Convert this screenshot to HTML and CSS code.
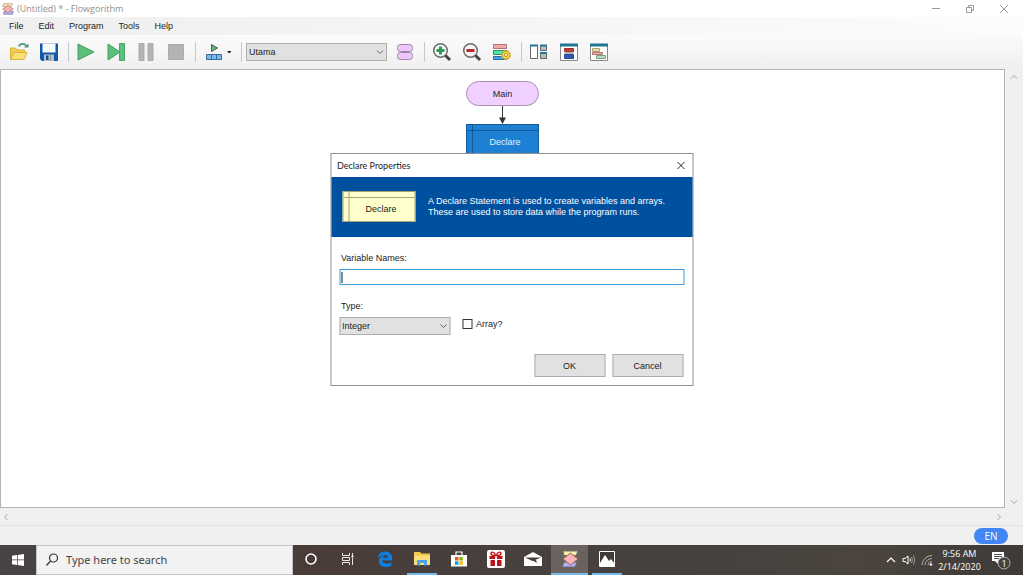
FILE: index.html
```html
<!DOCTYPE html>
<html lang="en">
<head>
<meta charset="utf-8">
<title>(Untitled) * - Flowgorithm</title>
<link rel="stylesheet" href="styles.css">
</head>
<body>
<header class="titlebar">
  <svg class="app-icon" width="12" height="12" viewBox="0 0 16 16"><path d="M2 1h12l-2 4H1z" fill="#f8eeb0" stroke="#aaa177"/><path d="M2 15h12l1-4H3z" fill="#b5b5f5" stroke="#7777aa"/><path d="M8 3l7 5-7 5-7-5z" fill="#f8b0b0" stroke="#bb7780"/></svg>
  <h1 class="title">(Untitled) * - Flowgorithm</h1>
  <button class="win-btn" aria-label="Minimize"><svg width="10" height="10" viewBox="0 0 10 10"><path d="M1 4.500h8"/></svg></button>
  <button class="win-btn" aria-label="Restore"><svg width="10" height="10" viewBox="0 0 10 10"><path d="M1.500 3.500h5v5h-5zM3.500 3.500v-2h5v5h-2"/></svg></button>
  <button class="win-btn" aria-label="Close"><svg width="10" height="10" viewBox="0 0 10 10"><path d="M1 1l8 8M9 1L1 9"/></svg></button>
</header>

<nav class="menubar">
  <button>File</button><button>Edit</button><button>Program</button><button>Tools</button><button>Help</button>
</nav>

<div class="toolbar">
  <button class="tool" aria-label="Open"><svg width="20" height="20" viewBox="0 0 20 20"><path d="M1.500 17.500V6h5l1.500 2h7.500v3" fill="#f3cf55" stroke="#d9ae35"/><path d="M1.500 17.500L5 10.500h13L15 17.500z" fill="#fbe07a" stroke="#dcb23a"/><path d="M10 4.500c1-3.500 6-3.500 7.500 0" fill="none" stroke="#4a9d78" stroke-width="1.800"/><path d="M15 5.500h4.500V1.500z" fill="#4a9d78"/></svg></button>
  <button class="tool" aria-label="Save"><svg width="20" height="20" viewBox="0 0 20 20"><path d="M1 1.500h18V19H3l-2-2z" fill="#1257a8"/><path d="M3.500 1.500h13v9h-13z" fill="#f4fafc"/><path d="M5 12.500h10V19H5z" fill="#b9c0c8"/><path d="M7 13.500h2.500V18H7z" fill="#174f93"/><path d="M11 13h1v6h-1z" fill="#8a929b"/></svg></button>
  <span class="sep"></span>
  <button class="tool" aria-label="Run"><svg width="20" height="20" viewBox="0 0 20 20"><path d="M2 2l16 8-16 8z" fill="#5dbf7c" stroke="#3f9f60"/></svg></button>
  <button class="tool" aria-label="Step"><svg width="20" height="20" viewBox="0 0 20 20"><path d="M2 2l12 8-12 8z" fill="#5dbf7c" stroke="#3f9f60"/><path d="M13.500 1.500h5v17h-5z" fill="#5dbf7c" stroke="#4aa769"/></svg></button>
  <button class="tool" aria-label="Pause"><svg width="20" height="20" viewBox="0 0 20 20"><path d="M3 1.500h5v17H3zM12 1.500h5v17h-5z" fill="#b4b4b4" stroke="#aaa"/></svg></button>
  <button class="tool" aria-label="Stop"><svg width="20" height="20" viewBox="0 0 20 20"><path d="M2.500 2.500h15v15h-15z" fill="#b4b4b4" stroke="#aaa"/></svg></button>
  <span class="sep"></span>
  <button class="tool tool-wide" aria-label="Run speed"><svg width="28" height="20" viewBox="0 0 28 20"><path d="M7.500 2.500l6 3.500-6 3.500z" fill="#5dbf7c" stroke="#555"/><path d="M2.500 12.500h15v5h-15zM7.500 12.500v5M12.500 12.500v5" fill="#7fb9f2" stroke="#3a6a96"/><path d="M23 9h4.500l-2.250 2.500z" fill="#222"/></svg></button>
  <span class="sep"></span>
  <div class="combo combo-fn">
    <select aria-label="Function"><option>Utama</option></select>
    <svg class="chev" width="8" height="6" viewBox="0 0 8 6"><path d="M1 1.500l3 3 3-3"/></svg>
  </div>
  <button class="tool" aria-label="Function manager"><svg width="20" height="20" viewBox="0 0 20 20"><g fill="#efc6fb" stroke="#9b86a3"><rect x="2.500" y="2.500" width="15" height="7" rx="3"/><rect x="2.500" y="10.500" width="15" height="7" rx="3"/></g></svg></button>
  <span class="sep"></span>
  <button class="tool" aria-label="Zoom in"><svg width="20" height="20" viewBox="0 0 20 20"><circle cx="8.500" cy="8.500" r="6.800" fill="#f4f8f6" stroke="#6b6b6b" stroke-width="1.500"/><path d="M13.500 13.500l4.500 4.500" stroke="#444" stroke-width="3"/><path d="M8.500 4.500v8M4.500 8.500h8" stroke="#2f9b57" stroke-width="3"/></svg></button>
  <button class="tool" aria-label="Zoom out"><svg width="20" height="20" viewBox="0 0 20 20"><circle cx="8.500" cy="8.500" r="6.800" fill="#f8f4f4" stroke="#6b6b6b" stroke-width="1.500"/><path d="M13.500 13.500l4.500 4.500" stroke="#444" stroke-width="3"/><path d="M4.500 8.500h8" stroke="#b92a2a" stroke-width="3"/></svg></button>
  <button class="tool" aria-label="Chart style"><svg width="20" height="20" viewBox="0 0 20 20"><path d="M1.500 2.500h13v4h-13z" fill="#f2a8a8" stroke="#a87676"/><path d="M1.500 8.500h13v4h-13z" fill="#4bec9e" stroke="#3a8b62"/><path d="M1.500 14.500h13v3h-13z" fill="#45a1ec" stroke="#2c6da8"/><circle cx="14" cy="13" r="4" fill="#f6da55" stroke="#c09b20"/><circle cx="14" cy="13" r="4.700" fill="none" stroke="#e2c03c" stroke-dasharray="2 1.700"/><circle cx="14" cy="13" r="1.600" fill="#fff" stroke="#b5952a"/></svg></button>
  <span class="sep"></span>
  <button class="tool" aria-label="Window layout"><svg width="20" height="20" viewBox="0 0 20 20"><g fill="#fff" stroke="#666"><path d="M1.500 3.500h7v13h-7z"/><path d="M11.500 3.500h6v5h-6zM11.500 10.500h6v6h-6z" fill="#bbb"/></g><path d="M1 2.500h8v2H1zM11 2.500h7v2h-7zM11 10h7v2h-7z" fill="#247594"/></svg></button>
  <button class="tool" aria-label="Variable watch"><svg width="20" height="20" viewBox="0 0 20 20"><path d="M1.500 2.500h17v16h-17z" fill="#fff" stroke="#888"/><path d="M1 1.500h18v3H1z" fill="#247594"/><path d="M5.500 6.500h9v3h-9z" fill="#c93737" stroke="#9b3030"/><path d="M5.500 9.800h9v2h-9z" fill="#a8a8a8"/><path d="M5.500 12.500h9v4h-9z" fill="#3158b5" stroke="#294994"/></svg></button>
  <button class="tool" aria-label="Console"><svg width="20" height="20" viewBox="0 0 20 20"><path d="M1.500 2.500h17v16h-17z" fill="#fff" stroke="#888"/><path d="M1 1.500h18v3H1z" fill="#247594"/><path d="M3.500 6.500h7v3h-7z" fill="#e5dca2" stroke="#aaa174"/><path d="M3.500 10.500h10v2h-10z" fill="#f2b4b4" stroke="#b97373"/><path d="M7.500 13.500h9v3h-9z" fill="#b5dcc0" stroke="#7aa486"/></svg></button>
</div>

<main class="workspace">
  <section class="canvas">
    <div class="terminal">Main</div>
    <svg class="arrow" width="7" height="18" viewBox="0 0 7 18"><path d="M3.500 0v13" stroke="#333"/><path d="M0 11.500h7L3.500 18z" fill="#333"/></svg>
    <div class="declare declare-selected">Declare</div>
  </section>
  <div class="scroll scroll-v"><svg class="chev" width="8" height="6" viewBox="0 0 8 6"><path d="M1 4.500l3-3 3 3"/></svg><svg class="chev" width="8" height="6" viewBox="0 0 8 6"><path d="M1 1.500l3 3 3-3"/></svg></div>
  <div class="scroll scroll-h"><svg class="chev" width="6" height="8" viewBox="0 0 6 8"><path d="M4.500 1l-3 3 3 3"/></svg><svg class="chev" width="6" height="8" viewBox="0 0 6 8"><path d="M1.500 1l3 3-3 3"/></svg></div>
</main>

<footer class="status"><button class="lang">EN</button></footer>

<div class="taskbar">
  <button class="task start" aria-label="Start"><svg width="12" height="12" viewBox="0 0 12 12"><path d="M0 1.700l5-.7v4.600H0zM5.700.900L12 0v5.600H5.700zM0 6.300h5V11l-5-.7zM5.700 6.300H12V12l-6.300-.9z" fill="#fff"/></svg></button>
  <label class="search">
    <svg width="14" height="14" viewBox="0 0 14 14"><circle cx="8.500" cy="5" r="4" fill="none" stroke="#333" stroke-width="1.200"/><path d="M5.500 8L1.500 12.500" stroke="#333" stroke-width="1.200"/></svg>
    <input type="text" placeholder="Type here to search" aria-label="Type here to search">
  </label>
  <button class="task" aria-label="Cortana"><svg width="16" height="16" viewBox="0 0 16 16"><circle cx="8" cy="8" r="5" fill="none" stroke="#fff" stroke-width="1.600"/></svg></button>
  <button class="task" aria-label="Task view"><svg width="16" height="16" viewBox="0 0 16 16"><path d="M2.500 2v2.500h7V2M2.500 14v-2.500h7V14M2.500 6.500h7v3h-7zM12.500 2v2.500M12.500 7v7" fill="none" stroke="#e8e8e8"/><path d="M11.500 4.500h2v2h-2z" fill="#fff"/></svg></button>
  <button class="task" aria-label="Edge"><svg width="18" height="18" viewBox="0 0 18 18"><path d="M1.500 8C2 4 5 1.500 9.200 1.500c4.300 0 7 3 7 7v2H6.300c.2 2.200 2.200 3 4.400 3 1.800 0 3.300-.5 4.600-1.300v3.500c-1.400.8-3.300 1.300-5.400 1.300-4.300 0-7-2.500-7-6 0-2.600 1.500-4.600 3.700-5.600C4 5.700 2.400 6.600 1.500 8zM6.500 7.800h5.600c0-1.700-1-2.800-2.700-2.800-1.600 0-2.700 1.200-2.900 2.800z" fill="#0f7fe0"/></svg></button>
  <button class="task open" aria-label="File Explorer"><svg width="18" height="18" viewBox="0 0 18 18"><path d="M1 2h6l1.500 1.500H17V15H1z" fill="#f3c64c"/><path d="M1 5.500h16V15H1z" fill="#fbdc7d"/><path d="M4 15.500v-5.500h10v5.500h-3V13H7v2.500z" fill="#4aa5e4"/></svg></button>
  <button class="task" aria-label="Store"><svg width="18" height="18" viewBox="0 0 18 18"><path d="M1 5h16v11.500H1z" fill="#fff"/><path d="M6 5V2h6v3" fill="none" stroke="#fff" stroke-width="1.200"/><path d="M5 7h3.500v3.500H5z" fill="#f25022"/><path d="M9.300 7h3.500v3.500H9.300z" fill="#7fba00"/><path d="M5 11.300h3.500v3.500H5z" fill="#00a4ef"/><path d="M9.300 11.300h3.500v3.500H9.300z" fill="#ffb900"/></svg></button>
  <button class="task" aria-label="Gifts"><svg width="18" height="18" viewBox="0 0 18 18"><rect width="18" height="18" rx="2" fill="#fff"/><path d="M2.500 6H8v3H2.500zM10 6h5.500v3H10zM3.500 10H8v6H3.500zM10 10h4.500v6H10z" fill="#b5171d"/><path d="M9 5.500C7 1 3.500 1.500 4 4c.2 1 2 1.500 5 1.500zM9 5.500c2-4.500 5.500-4 5-1.500-.2 1-2 1.500-5 1.500z" fill="none" stroke="#c8171d" stroke-width="1.400"/></svg></button>
  <button class="task" aria-label="Mail"><svg width="20" height="16" viewBox="0 0 20 16"><path d="M1 6l9-5 9 5v9H1z" fill="#fff"/><path d="M2 6.500h16L9.500 10z" fill="#453f3d"/><path d="M9 9l5 3-1-3z" fill="#453f3d"/></svg></button>
  <button class="task open active" aria-label="Flowgorithm"><svg width="18" height="18" viewBox="0 0 18 18"><path d="M2 1h15l-2 4.500H3z" fill="#fbf3a8" stroke="#776"/><path d="M3 12h13l-2 5H1z" fill="#b3b1f7" stroke="#667"/><path d="M9.500 3L17 9l-7.500 6L2 9z" fill="#ffb3b3" stroke="#966"/></svg></button>
  <button class="task open" aria-label="Photos"><svg width="18" height="18" viewBox="0 0 18 18"><path d="M1.500 1.500h15v15h-15z" fill="#3d3a38" stroke="#fff"/><path d="M2 13l5-8 4 6 2-2 4 5v3H2z" fill="#fff"/></svg></button>
  <div class="tray">
    <button class="tray-btn" aria-label="Show hidden icons"><svg width="10" height="10" viewBox="0 0 10 10"><path d="M1 7l4-4 4 4" fill="none" stroke="#fff" stroke-width="1.200"/></svg></button>
    <button class="tray-btn" aria-label="Volume"><svg width="14" height="12" viewBox="0 0 14 12"><path d="M1 4.500h2L6 2v8L3 7.500H1z" fill="none" stroke="#fff"/><path d="M8 4.500q1 1.500 0 3" fill="none" stroke="#fff"/><path d="M9.500 3q2 3 0 6M11.500 1.500q2.500 4.500 0 9" fill="none" stroke="#9a9694"/></svg></button>
    <button class="tray-btn" aria-label="Network"><svg width="12" height="12" viewBox="0 0 12 12"><path d="M1 11A10 10 0 0 1 11 1.500M4 11a7 7 0 0 1 7-6.500M7 11a4 4 0 0 1 4-3.500" fill="none" stroke="#b5b1af"/><circle cx="10" cy="10.500" r="1.200" fill="#fff"/></svg></button>
    <button class="clock"><span>9:56 AM</span><span>2/14/2020</span></button>
    <button class="notify" aria-label="Notifications"><svg width="20" height="20" viewBox="0 0 20 20"><path d="M1 2h12v9H7v3l-3-3H1z" fill="#fff"/><path d="M3 4.500h8M3 6.500h8M3 8.500h5" stroke="#555"/><circle cx="13" cy="13" r="6" fill="#45413f" stroke="#b5b1af"/></svg><span class="badge">1</span></button>
  </div>
</div>

<form class="dialog" role="dialog" aria-labelledby="dlg-title">
  <div class="dlg-head"><h2 id="dlg-title">Declare Properties</h2><button type="button" class="dlg-close" aria-label="Close"><svg width="9" height="9" viewBox="0 0 9 9"><path d="M1 1l7 7M8 1L1 8"/></svg></button></div>
  <div class="banner">
    <div class="declare declare-sample">Declare</div>
    <p>A Declare Statement is used to create variables and arrays.<br>These are used to store data while the program runs.</p>
  </div>
  <div class="dlg-body">
    <label class="caption" for="names">Variable Names:</label>
    <div class="field"><input id="names" type="text"><span class="caret"></span></div>
    <label class="caption" for="type">Type:</label>
    <div class="type-row">
      <div class="combo"><select id="type"><option>Integer</option></select><svg class="chev" width="8" height="6" viewBox="0 0 8 6"><path d="M1 1.500l3 3 3-3"/></svg></div>
      <label class="check"><input type="checkbox">Array?</label>
    </div>
    <div class="actions"><button type="button">OK</button><button type="button">Cancel</button></div>
  </div>
</form>
</body>
</html>
```

FILE: styles.css
```css
* { box-sizing: border-box; }
body {
  margin: 0;
  height: 100vh;
  display: flex;
  flex-direction: column;
  overflow: hidden;
  position: relative;
  background: #f0f0f0;
  color: #1c1c1c;
  font: 9px/12px "Liberation Sans", Arial, sans-serif;
}
button, input, select { font: inherit; color: inherit; margin: 0; }
button { border: 0; padding: 0; background: none; }
svg { display: block; flex: none; }
h1, h2, p { margin: 0; font-size: inherit; font-weight: normal; }

.titlebar { display: flex; align-items: center; height: 17px; padding: 0 2px; background: #fff; }
.title { flex: 1; padding-left: 3px; color: #909090; font-family: "Open Sans", sans-serif; }
.win-btn { width: 34px; height: 16px; display: grid; place-items: center; }
.win-btn path { fill: none; stroke: #9c9c9c; }

.menubar { display: flex; gap: 1px; height: 18px; padding-left: 2px; background: linear-gradient(90deg, #efefef, #fcfcfc); }
.menubar button { padding: 0 7px; }

.toolbar {
  display: flex;
  align-items: center;
  height: 34px;
  padding-left: 4px;
  background: linear-gradient(#fbfbfb, #f0f0f0);
}
.tool { width: 30px; height: 30px; display: grid; place-items: center; }
.tool-wide { width: 39px; }
.sep { width: 7px; height: 20px; display: grid; justify-content: end; padding-right: 2px; }
.sep::before { content: ""; width: 1px; background: #c8c8c8; }

.combo { display: grid; align-items: center; width: 111px; }
.combo > * { grid-area: 1 / 1; }
.combo select {
  appearance: none;
  width: 100%;
  height: 18px;
  padding: 0 2px;
  border: 1px solid #adadad;
  border-radius: 0;
  background: #e1e1e1;
}
.combo .chev { justify-self: end; margin-right: 3px; pointer-events: none; }
.combo-fn { width: 141px; margin: 0 3px 0 2px; }
.chev path { fill: none; stroke: #666; }

.workspace { flex: 1; display: grid; grid-template: 1fr 17px / 1fr 18px; }
.canvas {
  display: flex;
  flex-direction: column;
  align-items: center;
  padding-top: 11px;
  border: 1px solid #b4b4b4;
  background: #fff;
}
.terminal {
  width: 73px;
  height: 25px;
  border: 1px solid #ac8fb8;
  border-radius: 13px;
  background: #efd0ff;
  line-height: 24px;
  text-align: center;
}
.declare {
  width: 73px;
  height: 31px;
  padding: 5px 0 0 5px;
  border: 1px solid;
  background:
    linear-gradient(var(--line), var(--line)) 0 5px / 100% 1px no-repeat,
    linear-gradient(var(--line), var(--line)) 5px 0 / 1px 100% no-repeat,
    var(--fill);
  border-color: var(--line);
  line-height: 24px;
  text-align: center;
}
.declare-selected { --line: #155a98; --fill: #1e80d2; color: #e4f1fc; }
.declare-sample { --line: #a5a577; --fill: #ffffcc; color: #1c1c1c; flex: none; }
.scroll { display: flex; justify-content: space-between; align-items: center; }
.scroll .chev path { stroke: #aaa; }
.scroll-v { flex-direction: column; padding: 5px 0 3px; }
.scroll-h { padding: 0 3px; }

.status { display: flex; justify-content: flex-end; height: 20px; padding-right: 15px; border-top: 1px solid #e2e2e2; }
.lang {
  width: 34px;
  height: 16px;
  margin-top: 2px;
  border-radius: 8px;
  background: #4285f4;
  color: #fff;
  font: 10px/16px "Open Sans", sans-serif;
}

.taskbar {
  display: flex;
  height: 30px;
  background: linear-gradient(90deg, #484444, #493b38 30%, #47403d 50%, #45413f 65%, #4b443e 85%, #3d3a38);
}
.task { width: 37px; display: grid; place-items: center; border-bottom: 2px solid transparent; }
.start { width: 36px; border: 0; }
.open { background: linear-gradient(#76b9ed, #76b9ed) 50% 100% / 30px 2px no-repeat border-box; }
.active { background-color: #69625f; background-size: 37px 2px; }
.search { display: flex; align-items: center; gap: 7px; width: 257px; margin-right: -1px; padding-left: 8px; border: 1px solid #c4c4c4; background: #f2f2f2; }
.search input {
  flex: 1;
  min-width: 0;
  padding: 0;
  border: 0;
  outline: 0;
  background: none;
  font: 11px/16px "Noto Sans", sans-serif;
}
.search input::placeholder { color: #444; opacity: 1; }
.tray { display: flex; margin-left: auto; color: #fff; }
.tray-btn { width: 18px; display: grid; place-items: center; }
.clock { width: 47px; display: flex; flex-direction: column; align-items: center; justify-content: center; font: 9px/13px "Open Sans", sans-serif; }
.notify { position: relative; width: 40px; padding-right: 4px; display: grid; place-items: center; }
.notify .badge { position: absolute; left: 16px; top: 13px; width: 10px; font: 9px/12px "Open Sans", sans-serif; }

.dialog {
  position: absolute;
  left: 50%;
  top: 153px;
  transform: translateX(-50%);
  width: 363px;
  border: 1px solid #8f8f8f;
  background: #fff;
}
.dlg-head { display: flex; align-items: center; height: 23px; padding-left: 6px; }
.dlg-head h2 { flex: 1; font-family: Lato, sans-serif; }
.dlg-close { width: 22px; height: 22px; display: grid; place-items: center; }
.dlg-close path { stroke: #222; }
.banner { display: flex; align-items: center; gap: 13px; height: 60px; padding: 0 0 1px 11px; background: #0050a0; color: #fff; }
.banner p { line-height: 11px; white-space: nowrap; }
.dlg-body { padding: 15px 8px 8px; }
.caption { display: block; padding-left: 2px; }
.field { position: relative; margin: 5px 0 15px; }
.field input { display: block; width: 100%; height: 16px; padding: 0 3px; border: 1px solid #3d9be0; outline: 0; background: #fff; }
.caret { position: absolute; left: 2px; top: 3px; width: 1px; height: 11px; background: #111; }
.type-row { display: flex; align-items: flex-start; gap: 12px; margin-top: 5px; }
.check { display: flex; align-items: center; gap: 4px; padding-top: 1px; }
.check input { appearance: none; width: 10px; height: 10px; border: 1px solid #333; background: #fff; }
.actions { display: flex; justify-content: flex-end; gap: 7px; padding-right: 1px; margin-top: 19px; }
.actions button { width: 71px; height: 23px; border: 1px solid #adadad; background: #e1e1e1; }
```
